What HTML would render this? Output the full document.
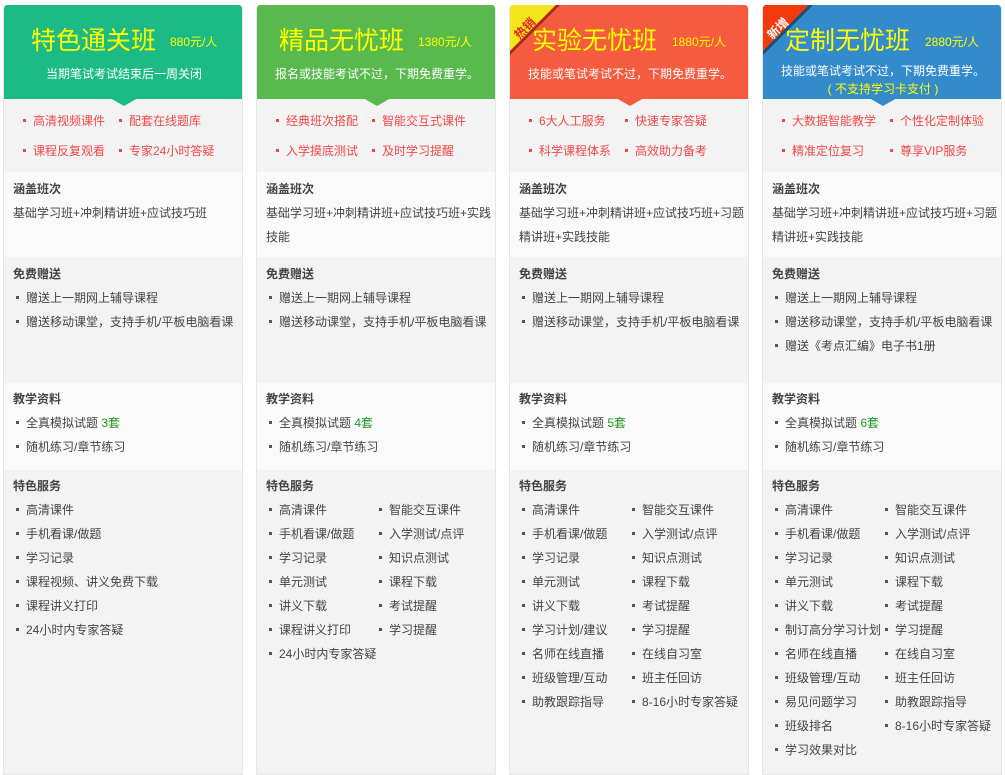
<!DOCTYPE html>
<html><head><meta charset="utf-8"><style>
*{margin:0;padding:0;box-sizing:border-box}
body{width:1005px;height:762px;background:#fff;font-family:"Liberation Sans","Noto Sans CJK SC",sans-serif;font-size:12px;color:#444;position:relative;overflow:hidden}
.col{position:absolute;top:5px;width:240px;height:770px;border:1px solid #e6e6e6;border-top:none;border-radius:4px 4px 0 0;background:#f3f3f3;overflow:hidden}
.hd{position:absolute;left:-1px;top:0;width:240px;height:94px;border-radius:4px 4px 0 0}
.tri{position:absolute;left:106px;top:93px;width:0;height:0;border-left:14px solid transparent;border-right:14px solid transparent;border-top:8px solid}
.t{position:absolute;top:20px;font-size:25px;color:#ff0;line-height:32px;white-space:nowrap}
.p{position:absolute;top:28px;font-size:12px;color:#ff0;white-space:nowrap}
.s{position:absolute;top:61px;left:0;width:240px;text-align:center;color:#fff;font-size:12px;line-height:16px}
.sec{position:absolute;left:0;width:238px}
.w{background:#fafafa}
.h{position:absolute;left:9px;font-weight:bold;color:#444;line-height:24px}
.i{position:absolute;line-height:24px;white-space:nowrap;color:#444}
.i:before{content:"";display:inline-block;width:3px;height:3px;background:#555;margin:0 7px 0 0;vertical-align:middle;position:relative;top:-1px}
.f{position:absolute;line-height:24px;white-space:nowrap;color:#f04848}
.f:before{content:"";display:inline-block;width:3px;height:3px;background:#f04848;margin-right:7px;vertical-align:middle;position:relative;top:-1px}
.g{color:#1a9a1a}
.txt{position:absolute;left:9px;width:228px;line-height:24px}
</style></head><body>

<!-- col1 -->
<div class="col" style="left:3px">
 <div class="hd" style="background:#1cbb86"></div><div class="tri" style="border-top-color:#1cbb86"></div>
 <div class="t" style="left:27px">特色通关班</div><div class="p" style="left:166px">880元/人</div>
 <div class="s">当期笔试考试结束后一周关闭</div>
 <div class="f" style="left:19px;top:104px">高清视频课件</div><div class="f" style="left:115px;top:104px">配套在线题库</div>
 <div class="f" style="left:19px;top:134px">课程反复观看</div><div class="f" style="left:115px;top:134px">专家24小时答疑</div>
 <div class="sec w" style="top:167px;height:85px"><div class="h" style="top:5px">涵盖班次</div><div class="txt" style="top:29px">基础学习班+冲刺精讲班+应试技巧班</div></div>
 <div class="sec" style="top:252px;height:126px"><div class="h" style="top:5px">免费赠送</div><div class="i" style="left:12px;top:29px">赠送上一期网上辅导课程</div><div class="i" style="left:12px;top:53px">赠送移动课堂，支持手机/平板电脑看课</div></div>
 <div class="sec w" style="top:378px;height:87px"><div class="h" style="top:4px">教学资料</div><div class="i" style="left:12px;top:28px">全真模拟试题 <span class="g">3套</span></div><div class="i" style="left:12px;top:52px">随机练习/章节练习</div></div>
 <div class="sec" style="top:465px;height:300px"><div class="h" style="top:4px">特色服务</div>
  <div class="i" style="left:12px;top:28px">高清课件</div><div class="i" style="left:12px;top:52px">手机看课/做题</div><div class="i" style="left:12px;top:76px">学习记录</div><div class="i" style="left:12px;top:100px">课程视频、讲义免费下载</div><div class="i" style="left:12px;top:124px">课程讲义打印</div><div class="i" style="left:12px;top:148px">24小时内专家答疑</div>
 </div>
</div>

<!-- col2 -->
<div class="col" style="left:256px">
 <div class="hd" style="background:#58ba4c"></div><div class="tri" style="border-top-color:#58ba4c"></div>
 <div class="t" style="left:22px">精品无忧班</div><div class="p" style="left:161px">1380元/人</div>
 <div class="s">报名或技能考试不过，下期免费重学。</div>
 <div class="f" style="left:19px;top:104px">经典班次搭配</div><div class="f" style="left:115px;top:104px">智能交互式课件</div>
 <div class="f" style="left:19px;top:134px">入学摸底测试</div><div class="f" style="left:115px;top:134px">及时学习提醒</div>
 <div class="sec w" style="top:167px;height:85px"><div class="h" style="top:5px">涵盖班次</div><div class="txt" style="top:29px">基础学习班+冲刺精讲班+应试技巧班+实践技能</div></div>
 <div class="sec" style="top:252px;height:126px"><div class="h" style="top:5px">免费赠送</div><div class="i" style="left:12px;top:29px">赠送上一期网上辅导课程</div><div class="i" style="left:12px;top:53px">赠送移动课堂，支持手机/平板电脑看课</div></div>
 <div class="sec w" style="top:378px;height:87px"><div class="h" style="top:4px">教学资料</div><div class="i" style="left:12px;top:28px">全真模拟试题 <span class="g">4套</span></div><div class="i" style="left:12px;top:52px">随机练习/章节练习</div></div>
 <div class="sec" style="top:465px;height:300px"><div class="h" style="top:4px">特色服务</div>
  <div class="i" style="left:12px;top:28px">高清课件</div><div class="i" style="left:12px;top:52px">手机看课/做题</div><div class="i" style="left:12px;top:76px">学习记录</div><div class="i" style="left:12px;top:100px">单元测试</div><div class="i" style="left:12px;top:124px">讲义下载</div><div class="i" style="left:12px;top:148px">课程讲义打印</div><div class="i" style="left:12px;top:172px">24小时内专家答疑</div>
  <div class="i" style="left:122px;top:28px">智能交互课件</div><div class="i" style="left:122px;top:52px">入学测试/点评</div><div class="i" style="left:122px;top:76px">知识点测试</div><div class="i" style="left:122px;top:100px">课程下载</div><div class="i" style="left:122px;top:124px">考试提醒</div><div class="i" style="left:122px;top:148px">学习提醒</div>
 </div>
</div>

<!-- col3 -->
<div class="col" style="left:509px">
 <div class="hd" style="background:#f55b3f"></div><div class="tri" style="border-top-color:#f55b3f"></div>
 <div class="t" style="left:22px">实验无忧班</div><div class="p" style="left:162px">1880元/人</div>
 <svg style="position:absolute;left:-1px;top:0" width="60" height="60"><polygon points="0,0 47,0 0,47" fill="#f5e61c"/><polygon points="47,0 51,0 0,51 0,47" fill="#a8281a"/><text x="3" y="27" transform="rotate(-45 16 22)" font-size="12" font-weight="bold" fill="#e8231d" font-family="Liberation Sans,Noto Sans CJK SC,sans-serif">热销</text></svg>
 <div class="s">技能或笔试考试不过，下期免费重学。</div>
 <div class="f" style="left:19px;top:104px">6大人工服务</div><div class="f" style="left:115px;top:104px">快速专家答疑</div>
 <div class="f" style="left:19px;top:134px">科学课程体系</div><div class="f" style="left:115px;top:134px">高效助力备考</div>
 <div class="sec w" style="top:167px;height:85px"><div class="h" style="top:5px">涵盖班次</div><div class="txt" style="top:29px">基础学习班+冲刺精讲班+应试技巧班+习题精讲班+实践技能</div></div>
 <div class="sec" style="top:252px;height:126px"><div class="h" style="top:5px">免费赠送</div><div class="i" style="left:12px;top:29px">赠送上一期网上辅导课程</div><div class="i" style="left:12px;top:53px">赠送移动课堂，支持手机/平板电脑看课</div></div>
 <div class="sec w" style="top:378px;height:87px"><div class="h" style="top:4px">教学资料</div><div class="i" style="left:12px;top:28px">全真模拟试题 <span class="g">5套</span></div><div class="i" style="left:12px;top:52px">随机练习/章节练习</div></div>
 <div class="sec" style="top:465px;height:300px"><div class="h" style="top:4px">特色服务</div>
  <div class="i" style="left:12px;top:28px">高清课件</div><div class="i" style="left:12px;top:52px">手机看课/做题</div><div class="i" style="left:12px;top:76px">学习记录</div><div class="i" style="left:12px;top:100px">单元测试</div><div class="i" style="left:12px;top:124px">讲义下载</div><div class="i" style="left:12px;top:148px">学习计划/建议</div><div class="i" style="left:12px;top:172px">名师在线直播</div><div class="i" style="left:12px;top:196px">班级管理/互动</div><div class="i" style="left:12px;top:220px">助教跟踪指导</div>
  <div class="i" style="left:122px;top:28px">智能交互课件</div><div class="i" style="left:122px;top:52px">入学测试/点评</div><div class="i" style="left:122px;top:76px">知识点测试</div><div class="i" style="left:122px;top:100px">课程下载</div><div class="i" style="left:122px;top:124px">考试提醒</div><div class="i" style="left:122px;top:148px">学习提醒</div><div class="i" style="left:122px;top:172px">在线自习室</div><div class="i" style="left:122px;top:196px">班主任回访</div><div class="i" style="left:122px;top:220px">8-16小时专家答疑</div>
 </div>
</div>

<!-- col4 -->
<div class="col" style="left:762px">
 <div class="hd" style="background:#338bcc"></div><div class="tri" style="border-top-color:#338bcc"></div>
 <div class="t" style="left:22px">定制无忧班</div><div class="p" style="left:162px">2880元/人</div>
 <svg style="position:absolute;left:-1px;top:0" width="60" height="60"><polygon points="0,0 47,0 0,47" fill="#f23a0c"/><polygon points="47,0 51,0 0,51 0,47" fill="#1d4f70"/><text x="3" y="27" transform="rotate(-45 16 22)" font-size="12" font-weight="bold" fill="#fff" font-family="Liberation Sans,Noto Sans CJK SC,sans-serif">新增</text></svg>
 <div class="s" style="top:58px">技能或笔试考试不过，下期免费重学。</div>
 <div class="s" style="top:76px;color:#ff0">( 不支持学习卡支付 )</div>
 <div class="f" style="left:19px;top:104px">大数据智能教学</div><div class="f" style="left:127px;top:104px">个性化定制体验</div>
 <div class="f" style="left:19px;top:134px">精准定位复习</div><div class="f" style="left:127px;top:134px">尊享VIP服务</div>
 <div class="sec w" style="top:167px;height:85px"><div class="h" style="top:5px">涵盖班次</div><div class="txt" style="top:29px">基础学习班+冲刺精讲班+应试技巧班+习题精讲班+实践技能</div></div>
 <div class="sec" style="top:252px;height:126px"><div class="h" style="top:5px">免费赠送</div><div class="i" style="left:12px;top:29px">赠送上一期网上辅导课程</div><div class="i" style="left:12px;top:53px">赠送移动课堂，支持手机/平板电脑看课</div><div class="i" style="left:12px;top:77px">赠送《考点汇编》电子书1册</div></div>
 <div class="sec w" style="top:378px;height:87px"><div class="h" style="top:4px">教学资料</div><div class="i" style="left:12px;top:28px">全真模拟试题 <span class="g">6套</span></div><div class="i" style="left:12px;top:52px">随机练习/章节练习</div></div>
 <div class="sec" style="top:465px;height:300px"><div class="h" style="top:4px">特色服务</div>
  <div class="i" style="left:12px;top:28px">高清课件</div><div class="i" style="left:12px;top:52px">手机看课/做题</div><div class="i" style="left:12px;top:76px">学习记录</div><div class="i" style="left:12px;top:100px">单元测试</div><div class="i" style="left:12px;top:124px">讲义下载</div><div class="i" style="left:12px;top:148px">制订高分学习计划</div><div class="i" style="left:12px;top:172px">名师在线直播</div><div class="i" style="left:12px;top:196px">班级管理/互动</div><div class="i" style="left:12px;top:220px">易见问题学习</div><div class="i" style="left:12px;top:244px">班级排名</div><div class="i" style="left:12px;top:268px">学习效果对比</div>
  <div class="i" style="left:122px;top:28px">智能交互课件</div><div class="i" style="left:122px;top:52px">入学测试/点评</div><div class="i" style="left:122px;top:76px">知识点测试</div><div class="i" style="left:122px;top:100px">课程下载</div><div class="i" style="left:122px;top:124px">考试提醒</div><div class="i" style="left:122px;top:148px">学习提醒</div><div class="i" style="left:122px;top:172px">在线自习室</div><div class="i" style="left:122px;top:196px">班主任回访</div><div class="i" style="left:122px;top:220px">助教跟踪指导</div><div class="i" style="left:122px;top:244px">8-16小时专家答疑</div>
 </div>
</div>
</body></html>
